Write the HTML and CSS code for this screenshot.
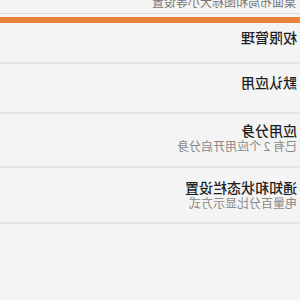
FILE: index.html
```html
<!DOCTYPE html>
<html lang="zh">
<head>
<meta charset="utf-8">
<link rel="stylesheet" href="styles.css">
</head>
<body>
<div class="mirror">
  <div class="top">
    <div class="top-text">桌面布局和图标大小等设置</div>
  </div>
  <div class="accent"></div>
  <div class="row r1">
    <div class="title">权限管理</div>
  </div>
  <div class="row r2">
    <div class="title">默认应用</div>
  </div>
  <div class="row r3">
    <div class="title">应用分身</div>
    <div class="sub">已有 2 个应用开启分身</div>
  </div>
  <div class="row r4">
    <div class="title">通知和状态栏设置</div>
    <div class="sub">电量百分比显示方式</div>
  </div>
</div>
</body>
</html>
```

FILE: styles.css
```css
html, body {
  margin: 0;
  padding: 0;
  background: #f4f4f4;
}
body {
  width: 300px;
  height: 300px;
  overflow: hidden;
  font-family: "Noto Sans CJK SC", "Noto Sans", sans-serif;
}
.mirror {
  transform: scaleX(-1);
  width: 300px;
}
.top {
  height: 13px;
  border-bottom: 1px solid #dcdcdc;
  overflow: hidden;
}
.top-text {
  font-size: 12px;
  line-height: 12px;
  color: #777;
  padding-left: 4px;
  margin-top: -4px;
}
.accent {
  margin-top: 3px;
  height: 6px;
  background: #e8843e;
}
.row {
  padding-left: 3px;
  border-bottom: 2px solid #e4e4e4;
}
.r1 { padding-top: 6px; padding-bottom: 17px; }
.r2 { padding-top: 10px; padding-bottom: 22px; }
.r3 { padding-top: 8px; padding-bottom: 12px; }
.r4 { padding-top: 11px; padding-bottom: 11px; }
.title {
  font-size: 14px;
  line-height: 16px;
  color: #1e1e1e;
  font-weight: 500;
}
.sub {
  font-size: 12px;
  line-height: 16px;
  color: #888;
}
```
